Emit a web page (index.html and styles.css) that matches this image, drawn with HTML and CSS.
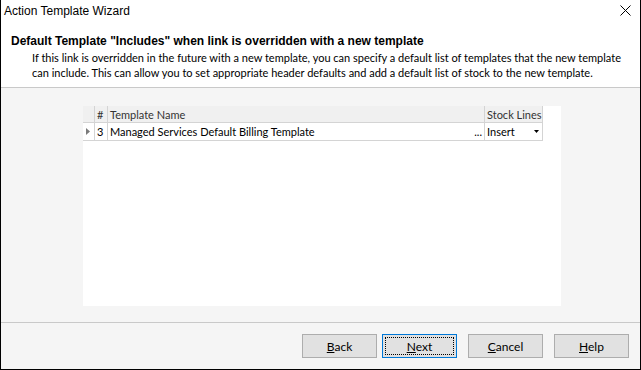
FILE: index.html
```html
<!DOCTYPE html>
<html>
<head>
<meta charset="utf-8">
<link rel="stylesheet" href="styles.css">
</head>
<body>
<div class="window">
  <div class="header">
    <div class="titlebar">
      <span class="title">Action Template Wizard</span>
      <svg class="close" width="11" height="11" viewBox="0 0 11 11"><path d="M0.5 0.5 L10.5 10.5 M10.5 0.5 L0.5 10.5" stroke="#000" stroke-width="1" fill="none"/></svg>
    </div>
    <div class="heading">Default Template "Includes" when link is overridden with a new template</div>
    <div class="desc">If this link is overridden in the future with a new template, you can specify a default list of templates that the new template<br>can include. This can allow you to set appropriate header defaults and add a default list of stock to the new template.</div>
  </div>
  <div class="content">
    <div class="panel">
      <div class="grid">
        <div class="row head">
          <div class="c ind"></div>
          <div class="c num">#</div>
          <div class="c name">Template Name</div>
          <div class="c stock">Stock Lines</div>
        </div>
        <div class="row data">
          <div class="c ind"><svg width="4" height="7" viewBox="0 0 4 7"><path d="M0 0 L4 3.5 L0 7 Z" fill="#7a7a7a"/></svg></div>
          <div class="c num">3</div>
          <div class="c name"><span>Managed Services Default Billing Template</span><span class="dots">...</span></div>
          <div class="c stock"><span>Insert</span><svg width="5" height="3" viewBox="0 0 5 3"><path d="M0 0 L5 0 L2.5 3 Z" fill="#000"/></svg></div>
        </div>
      </div>
    </div>
  </div>
  <div class="footer">
    <button class="btn"><u>B</u>ack</button>
    <button class="btn primary"><span class="focus"><u>N</u>ext</span></button>
    <button class="btn gap"><u>C</u>ancel</button>
    <button class="btn gap"><u>H</u>elp</button>
  </div>
</div>
</body>
</html>
```
FILE: styles.css
```css
html, body {
  margin: 0;
  padding: 0;
  background: #fff;
}
body {
  font-family: Lato, "Liberation Sans", Arial, sans-serif;
  font-size: 11px;
  color: #000;
}
.window {
  width: 641px;
  height: 370px;
  box-sizing: border-box;
  border: 1px solid #000;
  border-top: none;
  display: flex;
  flex-direction: column;
  background: #f5f5f5;
}
.header {
  background: #fff;
  height: 87px;
  border-bottom: 1px solid #c9c9c9;
  flex: none;
}
.titlebar {
  height: 31px;
  display: flex;
  align-items: flex-start;
  justify-content: space-between;
}
.title {
  margin: 4px 0 0 3px;
  font-family: "Liberation Sans", Arial, sans-serif;
  font-size: 12px;
}
.close {
  margin: 5px 9px 0 0;
}
.heading {
  font-family: "Liberation Sans", Arial, sans-serif;
  font-size: 12px;
  font-weight: bold;
  margin-left: 10px;
  line-height: 15px;
  margin-top: 3px;
}
.desc {
  margin: 1px 0 0 31px;
  font-size: 11px;
  line-height: 15px;
  white-space: nowrap;
}
.content {
  flex: 1;
  padding: 18px 79px 16px 82px;
  border-bottom: 1px solid #c9c9c9;
}
.panel {
  background: #fff;
  width: 478px;
  height: 200px;
}
.grid {
  width: 460px;
}
.row {
  display: flex;
  height: 16px;
  border-bottom: 1px solid #d4d4d4;
}
.row.data {
  height: 17px;
}
.row.head {
  background: #f0f0f0;
  color: #333;
}
.c {
  box-sizing: border-box;
  border-right: 1px solid #d4d4d4;
  padding-left: 2px;
  white-space: nowrap;
  overflow: hidden;
  display: flex;
  align-items: center;
}
.ind { width: 12px; padding-left: 3px; }
.num { width: 13px; }
.name { width: 377px; justify-content: space-between; }
.dots { padding-right: 2px; }
.stock { width: 58px; justify-content: space-between; }
.stock svg { margin-right: 3px; }
.footer {
  flex: none;
  height: 46px;
  display: flex;
  align-items: flex-start;
  padding: 11px 0 0 301px;
  box-sizing: border-box;
}
.btn {
  width: 75px;
  height: 24px;
  background: #e1e1e1;
  border: 1px solid #adadad;
  font-family: Lato, "Liberation Sans", Arial, sans-serif;
  font-size: 12px;
  color: #000;
  padding: 0;
  margin: 0 0 0 5px;
}
.btn:first-child { margin-left: 0; }
.btn.gap { margin-left: 11px; }
.btn.primary {
  border-color: #0078d7;
  padding: 2px;
}
.focus {
  display: flex;
  align-items: center;
  justify-content: center;
  height: 100%;
  border: 1px dotted #000;
  box-sizing: border-box;
}
```
